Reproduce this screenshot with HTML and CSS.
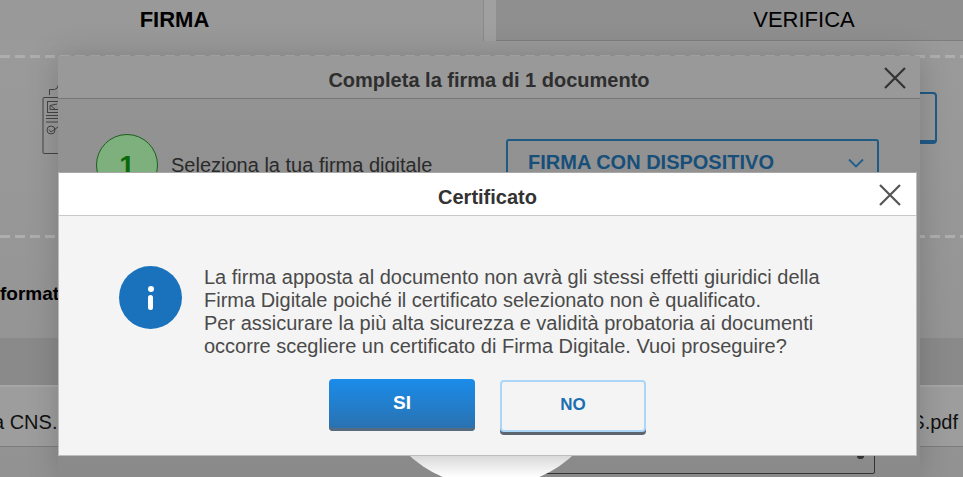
FILE: index.html
```html
<!DOCTYPE html>
<html lang="it">
<head>
  <meta charset="UTF-8">
  <meta name="viewport" content="width=device-width, initial-scale=1.0">
  <title>Firma - Certificato</title>
  <link rel="stylesheet" href="styles.css">
</head>
<body>
  <div class="page">
    <nav class="tabs">
      <div class="tab tab-active">FIRMA</div>
      <div class="tab tab-other">VERIFICA</div>
    </nav>

    <section class="drop-zone">
      <div class="dash"></div>
      <svg class="doc-icon" width="20" height="80" viewBox="0 0 20 80" fill="none" stroke="#444" stroke-width="1">
        <path d="M9.500 15V9.500h5q3 0 4-5"/>
        <path d="M18 17.500H4a1 1 0 0 0-1 1v54a1 1 0 0 0 1 1h14"/>
        <rect x="7.500" y="21.500" width="11" height="11"/>
        <path d="M17 24l-7 1.500v4h8M10.500 25.500l5 4"/>
        <path d="M6 35.500h13M6 38.500h13M6 42h13"/>
        <circle cx="11" cy="50" r="4"/>
        <path d="M9 49.500l2 2.500 7-5"/>
      </svg>
      <div class="dash"></div>
    </section>

    <h3 class="info-title">formativa</h3>
    <div class="band"></div>
    <div class="file-row">
      <span class="file-left">a CNS.</span>
      <span class="file-right">S.pdf</span>
    </div>

    <div class="peek-button"></div>

    <div class="modal-back">
      <div class="modal-back-head">
        <h2>Completa la firma di 1 documento</h2>
        <svg class="close" width="24" height="24" viewBox="0 0 24 24" stroke="#333" stroke-width="2.200" fill="none">
          <path d="M2 2l20 20M22 2L2 22"/>
        </svg>
      </div>
      <div class="step">
        <div class="step-num">1</div>
        <span class="step-label">Seleziona la tua firma digitale</span>
        <div class="select">
          <span>FIRMA CON DISPOSITIVO</span>
          <svg width="16" height="10" viewBox="0 0 16 10" stroke="#1f5f8c" stroke-width="1.800" fill="none">
            <path d="M1 1.500l7 7 7-7"/>
          </svg>
        </div>
      </div>
      <div class="bottom-box"><span class="box-mark"></span></div>
    </div>

    <div class="disc"></div>

    <div class="modal-front">
      <div class="modal-front-head">
        <h2>Certificato</h2>
        <svg class="close" width="24" height="24" viewBox="0 0 24 24" stroke="#555" stroke-width="2.200" fill="none">
          <path d="M2 2l20 20M22 2L2 22"/>
        </svg>
      </div>
      <div class="modal-body">
        <div class="message">
          <div class="info-icon">
            <span class="info-dot"></span>
            <span class="info-stem"></span>
          </div>
          <p>La firma apposta al documento non avrà gli stessi effetti giuridici della<br>
          Firma Digitale poiché il certificato selezionato non è qualificato.<br>
          Per assicurare la più alta sicurezza e validità probatoria ai documenti<br>
          occorre scegliere un certificato di Firma Digitale. Vuoi proseguire?</p>
        </div>
        <div class="actions">
          <button class="btn btn-yes">SI</button>
          <button class="btn btn-no">NO</button>
        </div>
      </div>
    </div>
  </div>
</body>
</html>
```

FILE: styles.css
```css
* {
  box-sizing: border-box;
  margin: 0;
  padding: 0;
  font-family: 'Liberation Sans', Arial, sans-serif;
}

body {
  background-color: #999;
}

.page {
  position: relative;
  width: 963px;
  height: 477px;
  overflow: hidden;
  background: linear-gradient(to bottom, #9b9b9b, #929292);
}

.tabs {
  display: flex;
  height: 41px;
  background-color: #a0a0a0;
}

.tab {
  display: flex;
  justify-content: center;
  padding-top: 7px;
  font-size: 22px;
  line-height: 25px;
  color: #000;
}

.tab-active {
  width: 484px;
  padding-right: 134px;
  font-weight: bold;
  background-color: #999;
  border-right: 1px solid #8a8a8a;
}

.tab-other {
  flex: 1;
  margin-left: 12px;
  padding-left: 149px;
  background-color: #8f8f8f;
  border-bottom: 1px solid #7e7e7e;
}

.drop-zone {
  display: flex;
  flex-direction: column;
  justify-content: space-between;
  position: relative;
  height: 183px;
  margin-top: 14px;
}

.dash {
  height: 3px;
  background: repeating-linear-gradient(90deg, #aeaeae 0 10px, transparent 10px 15px);
}

.doc-icon {
  position: absolute;
  left: 40px;
  top: 25px;
}

.info-title {
  margin-top: 44px;
  font-size: 19px;
  line-height: 24px;
  color: #000;
}

.band {
  height: 47px;
  margin-top: 32px;
  background-color: #8a8a8a;
}

.file-row {
  display: flex;
  justify-content: space-between;
  align-items: center;
  height: 62px;
  padding-top: 12px;
  font-size: 20px;
  color: #111;
  background-color: #9d9d9d;
  border-top: 2px solid #a6a6a6;
  border-bottom: 1px solid #7c7c7c;
}

.file-left {
  margin-left: -7px;
}

.file-right {
  margin-right: 5px;
}

.peek-button {
  position: absolute;
  left: 800px;
  top: 92px;
  width: 137px;
  height: 52px;
  border: 2px solid #1f5a85;
  border-bottom-width: 4px;
  border-radius: 4px;
}

.modal-back {
  position: absolute;
  left: 58px;
  top: 56px;
  width: 862px;
  height: 421px;
  background: linear-gradient(to bottom, #949494, #8a8a8a);
  box-shadow: 0 0 30px rgba(0, 0, 0, 0.18);
}

.modal-back-head {
  position: relative;
  height: 43px;
  text-align: center;
  background-color: #999;
  border-bottom: 1px solid #777;
}

.modal-back-head h2 {
  padding-top: 13px;
  font-size: 20px;
  line-height: 22px;
  color: #2e2e2e;
}

.close {
  position: absolute;
  right: 13px;
  top: 10px;
}

.step {
  display: flex;
  align-items: flex-start;
  padding: 35px 0 0 38px;
}

.step-num {
  width: 62px;
  height: 62px;
  padding-top: 15px;
  text-align: center;
  font-size: 28px;
  font-weight: bold;
  line-height: 32px;
  color: #0a6a0a;
  background-color: #7eb07e;
  border: 1px solid #1b5f1b;
  border-radius: 50%;
}

.step-label {
  margin: 19px 0 0 13px;
  font-size: 20px;
  line-height: 24px;
  color: #2a2a2a;
}

.select {
  display: flex;
  justify-content: space-between;
  align-items: center;
  width: 373px;
  height: 60px;
  margin: 5px 41px 0 auto;
  padding: 0 13px 13px 20px;
  font-size: 20px;
  font-weight: bold;
  color: #174f7a;
  border: 2px solid #1f5a85;
  border-radius: 3px;
}

.bottom-box {
  position: absolute;
  right: 45px;
  top: 380px;
  width: 340px;
  height: 38px;
  border: 1px solid #333;
  border-radius: 2px;
}

.box-mark {
  position: absolute;
  right: 10px;
  top: 19px;
  width: 7px;
  height: 3px;
  background-color: #333;
  border-radius: 0 0 3px 3px;
}

.disc {
  position: absolute;
  left: 369px;
  top: 243px;
  width: 244px;
  height: 244px;
  border-radius: 50%;
  background: linear-gradient(to bottom, #d8d8d8 87%, #fff 96%);
}

.modal-front {
  position: absolute;
  left: 58px;
  top: 172px;
  width: 859px;
  height: 284px;
  background-color: #f4f4f4;
  border: 1px solid #bdbdbd;
  border-top-color: #a8a8a8;
}

.modal-front-head {
  position: relative;
  height: 43px;
  text-align: center;
  background-color: #fff;
  border-bottom: 1px solid #c9c9c9;
}

.modal-front-head h2 {
  padding-top: 13px;
  font-size: 20px;
  line-height: 22px;
  color: #333;
}

.modal-front-head .close {
  right: 14px;
  top: 10px;
}

.modal-body {
  padding: 50px 0 0 60px;
}

.message {
  display: flex;
  align-items: flex-start;
  gap: 22px;
}

.info-icon {
  display: flex;
  flex-direction: column;
  align-items: center;
  gap: 3px;
  width: 63px;
  height: 63px;
  padding-top: 20px;
  background-color: #1a72bc;
  border-radius: 50%;
}

.info-dot {
  width: 6px;
  height: 6px;
  background-color: #fff;
  border-radius: 50%;
}

.info-stem {
  width: 5px;
  height: 15px;
  background-color: #fff;
  border-radius: 3px;
}

.message p {
  font-size: 20px;
  line-height: 23px;
  color: #4a4a4a;
}

.actions {
  display: flex;
  gap: 25px;
  margin: 21px 0 0 210px;
}

.btn {
  width: 146px;
  height: 52px;
  padding-bottom: 4px;
  font-size: 19px;
  font-weight: bold;
  border-radius: 4px;
  cursor: pointer;
}

.btn-yes {
  color: #fff;
  border: none;
  background: linear-gradient(to bottom, #1a8cea, #2b70ad);
  box-shadow: inset 0 -3px 0 #556b7f;
}

.btn-no {
  margin-top: 1px;
  padding-bottom: 3px;
  font-size: 17px;
  color: #1a6fb0;
  background-color: #f4f4f4;
  border: 2px solid #acd6f8;
  box-shadow: 0 3px 0 #5d6670;
}
```
